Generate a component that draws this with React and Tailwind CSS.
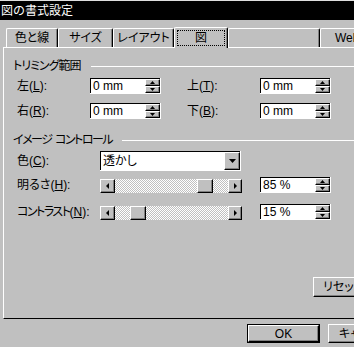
import React from "react";

const raised =
  "border border-t-white border-l-white border-r-black border-b-black shadow-[inset_-1px_-1px_0_#808080]";

function Tri({ dir }) {
  const pts = {
    up: "0,3 5,3 2.5,0",
    down: "0,0 5,0 2.5,3",
    left: "3,0 3,6 0,3",
    right: "0,0 0,6 3,3",
    dd: "0,0 7,0 3.5,4",
  }[dir];
  const size = {
    up: [5, 3],
    down: [5, 3],
    left: [3, 6],
    right: [3, 6],
    dd: [7, 4],
  }[dir];
  return (
    <svg width={size[0]} height={size[1]} viewBox={`0 0 ${size[0]} ${size[1]}`} className="block">
      <polygon points={pts} fill="#000" />
    </svg>
  );
}

function Label({ text, k, width, tight }) {
  return (
    <span className={`${width} shrink-0 whitespace-nowrap text-[12px] leading-none`}>
      <span className={tight ? "tracking-[-1.5px]" : ""}>{text}</span>(
      <u className="underline-offset-1">{k}</u>):
    </span>
  );
}

function SpinBox({ value }) {
  return (
    <div className="flex h-[16px] w-[71px] border-b border-r border-white">
      <div className="flex flex-1 items-center border-t border-l border-black bg-white pl-[2px] text-[12px] leading-none">
        <span className="flex-1 whitespace-nowrap">{value}</span>
        <div className="flex h-full w-[15px] flex-col bg-[#c0c0c0]">
          <div className={`${raised} flex flex-1 items-center justify-center bg-[#c0c0c0]`}>
            <Tri dir="up" />
          </div>
          <div className={`${raised} flex flex-1 items-center justify-center bg-[#c0c0c0]`}>
            <Tri dir="down" />
          </div>
        </div>
      </div>
    </div>
  );
}

function Slider({ value }) {
  const trackW = 113;
  const thumbW = 16;
  const left = Math.round(((trackW - thumbW) * value) / 100);
  return (
    <div className="flex h-[14px] w-[142px]">
      <div className={`${raised} flex w-[15px] items-center justify-center bg-[#c0c0c0]`}>
        <Tri dir="left" />
      </div>
      <div className="relative flex-1 bg-[image:repeating-conic-gradient(#fff_0_25%,#c0c0c0_0_50%)] bg-[length:2px_2px]">
        <div
          className={`${raised} absolute top-0 h-full w-[16px] bg-[#c0c0c0]`}
          style={{ left }}
        />
      </div>
      <div className={`${raised} flex w-[14px] items-center justify-center bg-[#c0c0c0]`}>
        <Tri dir="right" />
      </div>
    </div>
  );
}

function Group({ title, tracking }) {
  return (
    <div className="flex h-[14px] items-center pl-[9px]">
      <span className={`whitespace-pre text-[12px] leading-none ${tracking}`}>{title}</span>
      <div className="ml-[10px] h-px flex-1 bg-white" />
    </div>
  );
}

function Tab({ label, width, active, focus, align = "justify-center" }) {
  return (
    <div
      className={`${width} ${align} flex shrink-0 items-center whitespace-nowrap rounded-t-[2px] border-t border-l border-r border-t-white border-l-white border-r-black bg-[#c0c0c0] text-[12px] leading-none shadow-[inset_-1px_0_0_#808080] ${
        active ? "relative z-10 -mb-px h-[21px]" : "h-[19px]"
      }`}
    >
      {focus ? (
        <span className="border border-dotted border-black px-[17px] py-px">{label}</span>
      ) : (
        label
      )}
    </div>
  );
}

export default function App() {
  return (
    <div className="relative h-[347px] w-[354px] overflow-hidden bg-[#c0c0c0] font-['Liberation_Sans','Noto_Sans_CJK_JP',sans-serif] text-black [font-feature-settings:'palt']">
      <div className="flex h-[20px] items-center border-t border-[#dfdfdf] bg-black pl-px text-[12px] leading-none text-white [font-feature-settings:normal]">
        図の書式設定
      </div>

      <div className="flex h-[27px] items-end pl-[6px]">
        <Tab label="色と線" width="w-[52px]" />
        <Tab label="サイズ" width="w-[55px]" />
        <Tab label="レイアウト" width="w-[61px]" />
        <Tab label="図" width="w-[54px]" active focus />
        <Tab label="" width="w-[92px]" />
        <Tab label="Web" width="w-[60px]" align="justify-start pl-[14px]" />
      </div>

      <div className="ml-[3px] flex h-[272px] w-[380px] flex-col border-t border-l border-b border-t-white border-l-white border-b-black">
        <div className="mt-[11px]">
          <Group title="トリミング範囲" tracking="tracking-[-1px]" />
        </div>
        <div className="mt-[5px] flex items-center pl-[13px]">
          <Label text="左" k="L" width="w-[73px]" />
          <SpinBox value="0 mm" />
          <span className="w-[26px]" />
          <Label text="上" k="T" width="w-[73px]" />
          <SpinBox value="0 mm" />
        </div>
        <div className="mt-[9px] flex items-center pl-[13px]">
          <Label text="右" k="R" width="w-[73px]" />
          <SpinBox value="0 mm" />
          <span className="w-[26px]" />
          <Label text="下" k="B" width="w-[73px]" />
          <SpinBox value="0 mm" />
        </div>

        <div className="mt-[14px]">
          <Group title="イメージ  コントロール" tracking="tracking-[-1.5px]" />
        </div>
        <div className="mt-[4px] flex items-center pl-[13px]">
          <Label text="色" k="C" width="w-[83px]" />
          <div className="flex h-[20px] w-[141px] border-b border-r border-white">
            <div className="flex flex-1 items-center border-t border-l border-black bg-white pl-[2px] text-[12px] leading-none">
              <span className="flex-1">透かし</span>
              <div className={`${raised} flex h-full w-[16px] items-center justify-center bg-[#c0c0c0]`}>
                <Tri dir="dd" />
              </div>
            </div>
          </div>
        </div>
        <div className="mt-[6px] flex items-end pl-[13px]">
          <div className="flex h-[16px] w-[83px] shrink-0 items-center">
            <Label text="明るさ" k="H" width="" />
          </div>
          <Slider value={85} />
          <span className="w-[18px]" />
          <SpinBox value="85 %" />
        </div>
        <div className="mt-[11px] flex items-end pl-[13px]">
          <div className="flex h-[16px] w-[83px] shrink-0 items-center">
            <Label text="コントラスト" k="N" width="" tight />
          </div>
          <Slider value={15} />
          <span className="w-[18px]" />
          <SpinBox value="15 %" />
        </div>

        <div className="mt-[57px] pl-[309px]">
          <div className={`${raised} flex h-[20px] w-[75px] items-center justify-start whitespace-nowrap bg-[#c0c0c0] pl-[9px] text-[12px] leading-none`}>
            リセット
          </div>
        </div>
      </div>

      <div className="mt-[5px] flex pl-[247px]">
        <div className="h-[19px] w-[73px] shrink-0 border border-black">
          <div className={`${raised} flex h-full w-full items-center justify-center bg-[#c0c0c0] text-[12px] leading-none`}>
            OK
          </div>
        </div>
        <div className={`${raised} ml-[8px] flex h-[19px] w-[73px] shrink-0 items-center justify-start whitespace-nowrap bg-[#c0c0c0] pl-[10px] text-[12px] leading-none`}>
          キャンセル
        </div>
      </div>
    </div>
  );
}
